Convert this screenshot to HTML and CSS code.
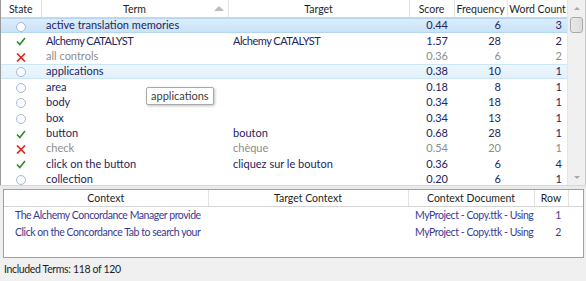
FILE: index.html
```html
<!DOCTYPE html>
<html>
<head>
  <link rel="stylesheet" href="styles.css">
</head>
<body>
  <div class="terms">
    <div class="terms-grid">
      <table class="grid">
        <colgroup>
          <col style="width:40px"><col style="width:187px"><col style="width:181px">
          <col style="width:45px"><col style="width:53px"><col style="width:61px">
        </colgroup>
        <thead>
          <tr>
            <th>State</th>
            <th class="sorted">Term<span class="sort-arrow"></span></th>
            <th>Target</th>
            <th>Score</th>
            <th>Frequency</th>
            <th>Word Count</th>
          </tr>
        </thead>
        <tbody>
          <tr class="selected">
            <td class="state"><span class="ico open"></span></td>
            <td>active translation memories</td><td></td>
            <td class="num">0.44</td><td class="num">6</td><td class="num">3</td>
          </tr>
          <tr>
            <td class="state"><svg class="ico" width="10" height="9" viewBox="0 0 10 9"><polyline points="1,4.5 3.8,7.6 9,1" fill="none" stroke="#2b8a2b" stroke-width="1.6"/></svg></td>
            <td class="caps">Alchemy CATALYST</td><td class="caps">Alchemy CATALYST</td>
            <td class="num">1.57</td><td class="num">28</td><td class="num">2</td>
          </tr>
          <tr class="rejected">
            <td class="state"><svg class="ico" width="10" height="9" viewBox="0 0 10 9"><path d="M1 0.5L9 8.5M9 0.5L1 8.5" stroke="#e0211d" stroke-width="1.6"/></svg></td>
            <td>all controls</td><td></td>
            <td class="num">0.36</td><td class="num">6</td><td class="num">2</td>
          </tr>
          <tr class="hover">
            <td class="state"><span class="ico open"></span></td>
            <td>applications</td><td></td>
            <td class="num">0.38</td><td class="num">10</td><td class="num">1</td>
          </tr>
          <tr>
            <td class="state"><span class="ico open"></span></td>
            <td>area</td><td></td>
            <td class="num">0.18</td><td class="num">8</td><td class="num">1</td>
          </tr>
          <tr>
            <td class="state"><span class="ico open"></span></td>
            <td>body</td><td></td>
            <td class="num">0.34</td><td class="num">18</td><td class="num">1</td>
          </tr>
          <tr>
            <td class="state"><span class="ico open"></span></td>
            <td>box</td><td></td>
            <td class="num">0.34</td><td class="num">13</td><td class="num">1</td>
          </tr>
          <tr>
            <td class="state"><svg class="ico" width="10" height="9" viewBox="0 0 10 9"><polyline points="1,4.5 3.8,7.6 9,1" fill="none" stroke="#2b8a2b" stroke-width="1.6"/></svg></td>
            <td>button</td><td>bouton</td>
            <td class="num">0.68</td><td class="num">28</td><td class="num">1</td>
          </tr>
          <tr class="rejected">
            <td class="state"><svg class="ico" width="10" height="9" viewBox="0 0 10 9"><path d="M1 0.5L9 8.5M9 0.5L1 8.5" stroke="#e0211d" stroke-width="1.6"/></svg></td>
            <td>check</td><td>chèque</td>
            <td class="num">0.54</td><td class="num">20</td><td class="num">1</td>
          </tr>
          <tr>
            <td class="state"><svg class="ico" width="10" height="9" viewBox="0 0 10 9"><polyline points="1,4.5 3.8,7.6 9,1" fill="none" stroke="#2b8a2b" stroke-width="1.6"/></svg></td>
            <td>click on the button</td><td>cliquez sur le bouton</td>
            <td class="num">0.36</td><td class="num">6</td><td class="num">4</td>
          </tr>
          <tr>
            <td class="state"><span class="ico open"></span></td>
            <td>collection</td><td></td>
            <td class="num">0.20</td><td class="num">6</td><td class="num">1</td>
          </tr>
        </tbody>
      </table>
      <div class="tooltip">applications</div>
    </div>
    <div class="scrollbar">
      <span class="arrow up"></span>
      <span class="thumb"></span>
      <span class="track"></span>
      <span class="arrow down"></span>
    </div>
  </div>

  <div class="splitter"></div>

  <div class="context">
    <table class="grid ctx">
      <colgroup>
        <col style="width:204px"><col style="width:200px"><col style="width:126px">
        <col style="width:34px"><col>
      </colgroup>
      <thead>
        <tr>
          <th>Context</th>
          <th>Target Context</th>
          <th>Context Document</th>
          <th>Row</th>
          <th></th>
        </tr>
      </thead>
      <tbody>
        <tr>
          <td class="clip">The Alchemy Concordance Manager provide</td><td></td>
          <td class="doc">MyProject - Copy.ttk - Using</td><td class="num">1</td><td></td>
        </tr>
        <tr>
          <td class="clip">Click on the Concordance Tab to search your</td><td></td>
          <td class="doc">MyProject - Copy.ttk - Using</td><td class="num">2</td><td></td>
        </tr>
      </tbody>
    </table>
  </div>

  <div class="status">Included Terms: 118 of 120</div>
</body>
</html>
```

FILE: styles.css
```css
body {
  margin: 0;
  width: 586px;
  height: 281px;
  overflow: hidden;
  background: #f0f0f0;
  font-family: Lato, "Open Sans", sans-serif;
  font-size: 11px;
  color: #1e1e1e;
}

.terms {
  display: flex;
  height: 185px;
  background: white;
  border-left: 1px solid #9a9a9a;
  border-right: 1px solid #c8c8c8;
  box-sizing: border-box;
}

.terms-grid {
  flex: 1;
  position: relative;
  overflow: hidden;
}

.grid {
  border-collapse: collapse;
  table-layout: fixed;
  width: 100%;
}

.grid th {
  height: 17px;
  padding: 0;
  font-weight: normal;
  font-size: 10.5px;
  color: #1e1e1e;
  text-align: center;
  white-space: nowrap;
  border-right: 1px solid #e3e3e3;
  border-bottom: 1px solid #d5d5d5;
  background: white;
  position: relative;
}

.grid tbody tr {
  height: 15.4px;
}

.grid td {
  padding: 0 5px;
  white-space: nowrap;
  overflow: hidden;
  color: #24245e;
  line-height: 12px;
}

.grid td.caps {
  letter-spacing: -0.5px;
}

.grid td.num {
  text-align: right;
  padding-right: 6px;
}

.grid td.state {
  text-align: center;
  padding: 0;
}

.sort-arrow {
  position: absolute;
  right: 4px;
  top: 6px;
  width: 0;
  height: 0;
  border-left: 5px solid transparent;
  border-right: 5px solid transparent;
  border-bottom: 5px solid #bcbcbc;
}

tr.selected td {
  background: linear-gradient(#dcedfb, #c6e2f7);
  box-shadow: inset 0 1px #b4d6f2, inset 0 -1px #b4d6f2;
}

tr.hover td {
  background: linear-gradient(#eef7fd, #e1f0fb);
  box-shadow: inset 0 1px #cde6f7, inset 0 -1px #cde6f7;
}

tr.rejected td {
  color: #8c8c8c;
}

.ico {
  display: inline-block;
  vertical-align: middle;
}

.ico.open {
  width: 8px;
  height: 8px;
  border: 1px solid #a9b9d3;
  border-radius: 50%;
  background: #fbfcfe;
}

.tooltip {
  position: absolute;
  left: 145px;
  top: 87px;
  padding: 1px 4px 2px;
  background: white;
  border: 1px solid #a8a8a8;
  border-radius: 2px;
  box-shadow: 1px 1px 3px rgba(0, 0, 0, 0.25);
  color: #3c3c3c;
}

.scrollbar {
  width: 17px;
  display: flex;
  flex-direction: column;
  align-items: center;
  background: #f0f0f0;
  border-left: 1px solid #e6e6e6;
}

.scrollbar .arrow {
  height: 17px;
  width: 100%;
  position: relative;
}

.scrollbar .arrow::after {
  content: "";
  position: absolute;
  left: 6px;
  top: 7px;
  border-left: 3px solid transparent;
  border-right: 3px solid transparent;
}

.scrollbar .up::after {
  border-bottom: 3px solid #a8a8a8;
}

.scrollbar .down::after {
  border-top: 3px solid #a8a8a8;
  top: 8px;
}

.scrollbar .thumb {
  width: 13px;
  height: 16px;
  background: linear-gradient(90deg, #e9e9e9, #dcdcdc);
  border: 1px solid #a9a9a9;
  border-radius: 3px;
  box-sizing: border-box;
}

.scrollbar .track {
  flex: 1;
}

.splitter {
  height: 3px;
  background: #eaeaea;
  border-top: 1px solid #d8d8d8;
}

.context {
  margin: 0 2px 0 3px;
  height: 69px;
  background: white;
  border: 1px solid #a0a0a0;
  box-sizing: border-box;
}

.ctx th {
  height: 16px;
}

.ctx th:last-child {
  border-right: none;
}

.ctx tbody tr {
  height: 17px;
}

.ctx td {
  color: #3a3a96;
  font-size: 10.5px;
  letter-spacing: -0.45px;
}

.ctx td.clip {
  padding-left: 11px;
}

.ctx td.doc {
  padding-left: 7px;
  padding-right: 0;
}

.ctx td.num {
  color: #3a3a96;
  padding-right: 7px;
}

.status {
  padding: 5px 4px;
  font-size: 10.5px;
  letter-spacing: -0.35px;
  color: #1e1e1e;
}
```
